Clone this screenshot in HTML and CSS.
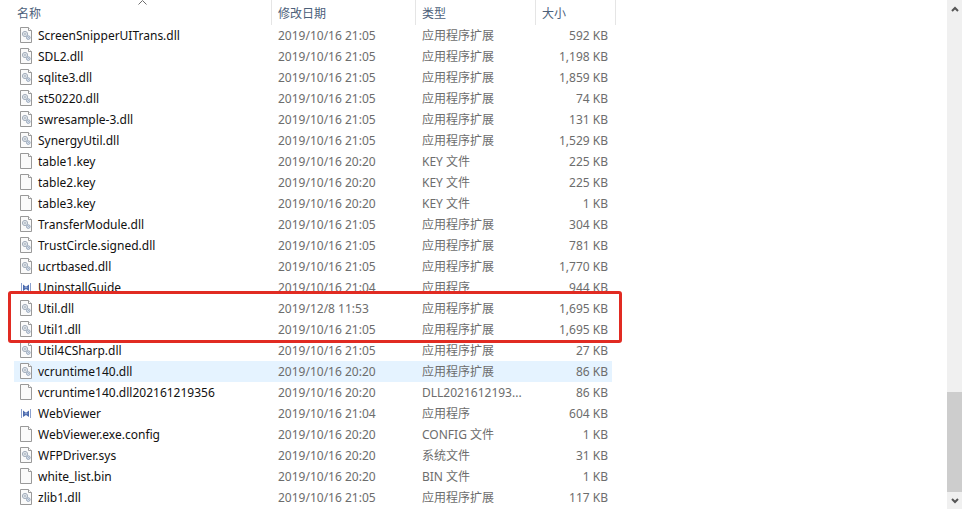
FILE: index.html
```html
<!DOCTYPE html>
<html lang="zh-CN">
<head>
    <meta charset="UTF-8">
    <meta name="viewport" content="width=device-width, initial-scale=1.0">
    <title>文件列表</title>
    <link rel="stylesheet" href="styles.css">
</head>
<body>

    <!-- 图标 -->
    <svg class="sprite" aria-hidden="true">
        <symbol id="icon-file" viewBox="0 0 14 16">
            <path d="M1.5 .5h8l3 3v12h-11z" fill="#fafafa" stroke="#999"/>
            <path d="M9.5 .5v3h3" fill="#fff" stroke="#999"/>
        </symbol>
        <symbol id="icon-dll" viewBox="0 0 14 16">
            <path d="M1.5 .5h8l3 3v12h-11z" fill="#fafafa" stroke="#999"/>
            <path d="M9.5 .5v3h3" fill="#fff" stroke="#999"/>
            <circle cx="6" cy="7" r="2.6" fill="#eef1f5" stroke="#9aa5b3" stroke-width=".9"/>
            <circle cx="6" cy="7" r="1" fill="none" stroke="#9aa5b3" stroke-width=".7"/>
            <circle cx="9.300" cy="10.600" r="1.800" fill="#dfe7f1" stroke="#8c9db3" stroke-width=".9"/>
            <circle cx="9.300" cy="10.600" r=".5" fill="#8c9db3"/>
        </symbol>
        <symbol id="icon-exe" viewBox="0 0 14 16">
            <path d="M2.500 4v9M11.500 4v9" stroke="#8ba1cf"/>
            <path d="M4 5.500l3 2.300 3-2.300v6.500L7 10l-3 2z" fill="#4a69ad"/>
            <path d="M5.500 8.700h3" stroke="#a9bce0" stroke-width=".8"/>
        </symbol>
    </svg>

    <main class="file-list">
        <table class="files">
            <colgroup>
                <col class="col-name">
                <col class="col-date">
                <col class="col-type">
                <col class="col-size">
            </colgroup>
            <thead>
                <tr>
                    <th class="sorted" aria-sort="ascending">名称
                        <svg class="sort-arrow" viewBox="0 0 9 5"><path d="M.5 4.500l4-4 4 4"/></svg>
                    </th>
                    <th>修改日期</th>
                    <th>类型</th>
                    <th>大小</th>
                </tr>
            </thead>
            <tbody>
                <tr><td><svg class="icon"><use href="#icon-dll"/></svg>ScreenSnipperUITrans.dll</td><td>2019/10/16 21:05</td><td>应用程序扩展</td><td>592 KB</td></tr>
                <tr><td><svg class="icon"><use href="#icon-dll"/></svg>SDL2.dll</td><td>2019/10/16 21:05</td><td>应用程序扩展</td><td>1,198 KB</td></tr>
                <tr><td><svg class="icon"><use href="#icon-dll"/></svg>sqlite3.dll</td><td>2019/10/16 21:05</td><td>应用程序扩展</td><td>1,859 KB</td></tr>
                <tr><td><svg class="icon"><use href="#icon-dll"/></svg>st50220.dll</td><td>2019/10/16 21:05</td><td>应用程序扩展</td><td>74 KB</td></tr>
                <tr><td><svg class="icon"><use href="#icon-dll"/></svg>swresample-3.dll</td><td>2019/10/16 21:05</td><td>应用程序扩展</td><td>131 KB</td></tr>
                <tr><td><svg class="icon"><use href="#icon-dll"/></svg>SynergyUtil.dll</td><td>2019/10/16 21:05</td><td>应用程序扩展</td><td>1,529 KB</td></tr>
                <tr><td><svg class="icon"><use href="#icon-file"/></svg>table1.key</td><td>2019/10/16 20:20</td><td>KEY 文件</td><td>225 KB</td></tr>
                <tr><td><svg class="icon"><use href="#icon-file"/></svg>table2.key</td><td>2019/10/16 20:20</td><td>KEY 文件</td><td>225 KB</td></tr>
                <tr><td><svg class="icon"><use href="#icon-file"/></svg>table3.key</td><td>2019/10/16 20:20</td><td>KEY 文件</td><td>1 KB</td></tr>
                <tr><td><svg class="icon"><use href="#icon-dll"/></svg>TransferModule.dll</td><td>2019/10/16 21:05</td><td>应用程序扩展</td><td>304 KB</td></tr>
                <tr><td><svg class="icon"><use href="#icon-dll"/></svg>TrustCircle.signed.dll</td><td>2019/10/16 21:05</td><td>应用程序扩展</td><td>781 KB</td></tr>
                <tr><td><svg class="icon"><use href="#icon-dll"/></svg>ucrtbased.dll</td><td>2019/10/16 21:05</td><td>应用程序扩展</td><td>1,770 KB</td></tr>
                <tr><td><svg class="icon"><use href="#icon-exe"/></svg>UninstallGuide</td><td>2019/10/16 21:04</td><td>应用程序</td><td>944 KB</td></tr>
            </tbody>
            <!-- 红框标出的文件 -->
            <tbody class="marked">
                <tr><td><svg class="icon"><use href="#icon-dll"/></svg>Util.dll</td><td>2019/12/8 11:53</td><td>应用程序扩展</td><td>1,695 KB</td></tr>
                <tr><td><svg class="icon"><use href="#icon-dll"/></svg>Util1.dll</td><td>2019/10/16 21:05</td><td>应用程序扩展</td><td>1,695 KB</td></tr>
            </tbody>
            <tbody>
                <tr><td><svg class="icon"><use href="#icon-dll"/></svg>Util4CSharp.dll</td><td>2019/10/16 21:05</td><td>应用程序扩展</td><td>27 KB</td></tr>
                <tr class="hovered"><td><svg class="icon"><use href="#icon-dll"/></svg>vcruntime140.dll</td><td>2019/10/16 20:20</td><td>应用程序扩展</td><td>86 KB</td></tr>
                <tr><td><svg class="icon"><use href="#icon-file"/></svg>vcruntime140.dll202161219356</td><td>2019/10/16 20:20</td><td>DLL2021612193...</td><td>86 KB</td></tr>
                <tr><td><svg class="icon"><use href="#icon-exe"/></svg>WebViewer</td><td>2019/10/16 21:04</td><td>应用程序</td><td>604 KB</td></tr>
                <tr><td><svg class="icon"><use href="#icon-file"/></svg>WebViewer.exe.config</td><td>2019/10/16 20:20</td><td>CONFIG 文件</td><td>1 KB</td></tr>
                <tr><td><svg class="icon"><use href="#icon-dll"/></svg>WFPDriver.sys</td><td>2019/10/16 20:20</td><td>系统文件</td><td>31 KB</td></tr>
                <tr><td><svg class="icon"><use href="#icon-file"/></svg>white_list.bin</td><td>2019/10/16 20:20</td><td>BIN 文件</td><td>1 KB</td></tr>
                <tr><td><svg class="icon"><use href="#icon-dll"/></svg>zlib1.dll</td><td>2019/10/16 21:05</td><td>应用程序扩展</td><td>117 KB</td></tr>
            </tbody>
        </table>
    </main>

    <div class="scrollbar">
        <button type="button" aria-label="向上滚动"><svg viewBox="0 0 8 6"><path d="M1 5l3-3 3 3"/></svg></button>
        <div class="track"><div class="thumb"></div></div>
        <button type="button" aria-label="向下滚动"><svg viewBox="0 0 8 6"><path d="M1 1l3 3 3-3"/></svg></button>
    </div>

</body>
</html>
```
FILE: styles.css
```css
body {
    margin: 0;
    height: 100vh;
    display: flex;
    overflow: hidden;
    background-color: #fff;
    color: #111;
    font-family: "Noto Sans", "Noto Sans CJK SC", sans-serif;
    font-size: 12px;
    line-height: 20px;
}

.sprite {
    position: absolute;
    width: 0;
    height: 0;
}

/* 文件列表 */
.file-list {
    flex: 1;
    padding-left: 14px;
    overflow: hidden;
}

.files {
    width: 602px;
    table-layout: fixed;
    border-collapse: separate;
    border-spacing: 0;
}

.col-name { width: 258px; }
.col-date { width: 144px; }
.col-type { width: 120px; }
.col-size { width: 80px; }

.files th {
    height: 23px;
    padding: 2px 0 0 6px;
    border-right: 1px solid #e5e5e5;
    color: #4c607a;
    font-weight: normal;
    text-align: left;
}

.files th.sorted {
    position: relative;
    padding-left: 3px;
}

.sort-arrow {
    position: absolute;
    top: 0;
    left: 50%;
    width: 9px;
    height: 5px;
    margin-left: -5px;
    fill: none;
    stroke: #6d6d6d;
}

.files td {
    height: 21px;
    padding: 0 0 0 6px;
    color: #6d6d6d;
    white-space: nowrap;
}

.files td:first-child {
    color: #111;
}

.files td:last-child {
    padding: 0 4px 0 0;
    border-right: 4px solid transparent;
    background-clip: padding-box;
    text-align: right;
}

.icon {
    width: 14px;
    height: 16px;
    margin-right: 5px;
    margin-bottom: 2px;
    margin-left: -1px;
    vertical-align: middle;
}

.hovered td {
    background-color: #e5f3ff;
}

.marked {
    position: relative;
}

.marked::after {
    content: "";
    position: absolute;
    top: -7px;
    right: -6px;
    bottom: -3px;
    left: -6px;
    border: 3px solid #e12b22;
    border-radius: 3px;
    pointer-events: none;
}

/* 滚动条 */
.scrollbar {
    display: flex;
    flex-direction: column;
    width: 15px;
    margin-right: 1px;
    background-color: #f0f0f0;
}

.scrollbar button {
    display: flex;
    align-items: center;
    justify-content: center;
    height: 17px;
    padding: 0;
    border: none;
    background: none;
}

.scrollbar svg {
    width: 8px;
    height: 6px;
    fill: none;
    stroke: #555;
    stroke-width: 2;
}

.track {
    flex: 1;
    display: flex;
    align-items: flex-end;
}

.thumb {
    width: 100%;
    height: 21%;
    background-color: #cdcdcd;
}
```
